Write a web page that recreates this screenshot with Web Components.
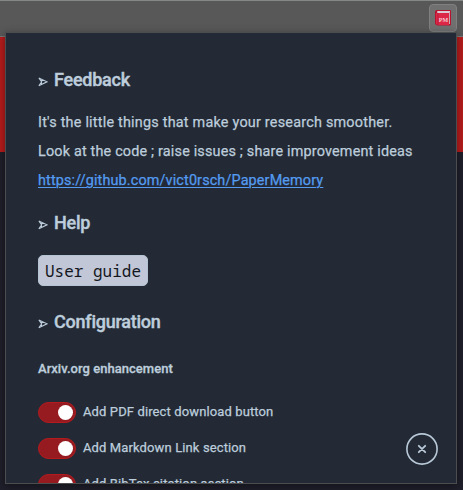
<!DOCTYPE html>
<html lang="en">
<head>
<meta charset="utf-8">
<title>PaperMemory</title>
<style>
html,body{margin:0;height:100%;overflow:hidden;background:#1e1f2a}
</style>
</head>
<body>
<memory-app></memory-app>
<script>
const define = (name, html) => customElements.define(name, class extends HTMLElement {
  constructor() {
    super();
    this.attachShadow({mode: 'open'}).innerHTML = html;
  }
});

define('section-title', `<style>
:host{display:flex;align-items:center;height:24px;gap:6px;font-size:18px;line-height:24px;font-weight:500;color:#bdcddc;letter-spacing:-.24px;-webkit-text-stroke:.4px #bdcddc}
svg{width:10px;height:10px;margin-top:3px;flex:none}
</style><svg viewBox="0 0 10 10" fill="none" stroke="#bdcddc" stroke-width="1.1"><path d="M.8 1 9 4.8.8 8.8M.8 1 3.7 4.8.8 8.8M3.4 2.3v5.2"/></svg><span><slot></slot></span>`);

define('guide-button', `<style>
:host{display:flex;box-sizing:border-box;width:110px;height:31px;border-radius:5px;background:#c1c7d7;border:1px solid #b4c4d2;align-items:center;justify-content:center;color:#14171e;font:16px/28px "Noto Sans Mono","DejaVu Sans Mono",monospace}
</style><span><slot></slot></span>`);

define('toggle-row', `<style>
:host{display:flex;height:22px;gap:7px;align-items:center;font-size:13px;line-height:20px;color:#bdcddc}
i{box-sizing:border-box;width:38px;height:21px;border:1px solid #b71a1d;border-radius:11px;background:#951b21;display:flex;justify-content:flex-end;align-items:center;padding-right:2px}
i::after{content:"";width:15px;height:15px;border-radius:50%;background:#fff}
span{margin-top:-1px;letter-spacing:.12px;-webkit-text-stroke:.25px #bdcddc}
</style><i></i><span><slot></slot></span>`);

define('close-button', `<style>
:host{display:block;width:32px;height:32px}
svg{display:block}
</style><svg width="32" height="32" viewBox="0 0 32 32" fill="none" stroke="#b9c9d8"><circle cx="16" cy="16" r="15.1" stroke-width="1.6"/><path d="m12.8 12.8 6.4 6.4m0-6.4-6.4 6.4" stroke-width="1.8" stroke-linecap="round"/></svg>`);

define('tool-bar', `<style>
:host{display:flex;box-sizing:border-box;height:37px;background:#585858;border-top:1px solid #858786;border-bottom:1px solid #777;justify-content:flex-end;padding:3px 6px 0 0}
div{box-sizing:border-box;width:28px;height:28px;border-radius:4px;background:#707070;border:1px solid #808080;padding:5px 0 0 5px}
svg{display:block}
</style><div><svg width="17" height="17" viewBox="0 0 17 17"><path d="M2 0h13q1 0 1 1v13.500q0 1-1 1H3q-3 0-3-3V2q0-2 2-2" fill="#b51330"/><path d="M3 1h12v2H3q-1 0-1-1t1-1" fill="#d9cdd3"/><path d="M14 2h1v12h-1" fill="#c8a9b1"/><path d="M1 3h13v12H3q-2 0-2-2" fill="#dc2746"/><path d="M3 3v12" stroke="#b71c39"/><text x="3.7" y="11.5" font-family="Liberation Serif,serif" font-size="6" font-weight="bold" fill="#f5cbd2" textLength="9.5">PM</text></svg></div>`);

define('memory-panel', `<style>
:host{display:block;box-sizing:border-box;position:absolute;left:5px;top:32px;width:452px;height:452px;background:#232a35;border:1px solid #4c4d4e;overflow:hidden;padding:35px 32px 0;color:#bdcddc;font-family:Roboto,sans-serif;box-shadow:0 2px 8px #0006}
.copy{font-size:14.4px;line-height:29px;margin:16px 0 -1px;-webkit-text-stroke:.25px}
.copy div{white-space:nowrap}
.a{letter-spacing:.22px}
.b{letter-spacing:.18px}
a{color:#549bf1;letter-spacing:.14px;text-decoration:underline;text-underline-offset:2px;text-decoration-thickness:1px}
.help{margin-top:17px}
guide-button{margin-top:20px}
.conf{margin-top:24px}
h3{font-size:13px;line-height:20px;font-weight:500;margin:25px 0 22px;letter-spacing:.04px;-webkit-text-stroke:.3px #bdcddc}
.rows{display:grid;gap:14px}
close-button{position:absolute;left:400px;top:400px}
</style>
<section-title>Feedback</section-title>
<div class="copy"><div><span class="a">It's the little things that make your research smoother.</span></div><div><span class="b">Look at the code ; raise issues ; share improvement ideas</span></div><div><a>https://github.com/vict0rsch/PaperMemory</a></div></div>
<section-title class="help">Help</section-title>
<guide-button>User guide</guide-button>
<section-title class="conf">Configuration</section-title>
<h3>Arxiv.org enhancement</h3>
<div class="rows"><toggle-row>Add PDF direct download button</toggle-row><toggle-row>Add Markdown Link section</toggle-row><toggle-row>Add BibTex citation section</toggle-row></div>
<close-button></close-button>`);

define('memory-app', `<style>
:host{display:block;position:relative;width:463px;height:490px;overflow:hidden;background:#1e1f2a}
.band{height:115px;background:#b51c1d}
</style><tool-bar></tool-bar><div class="band"></div><memory-panel></memory-panel>`);
</script>
</body>
</html>
